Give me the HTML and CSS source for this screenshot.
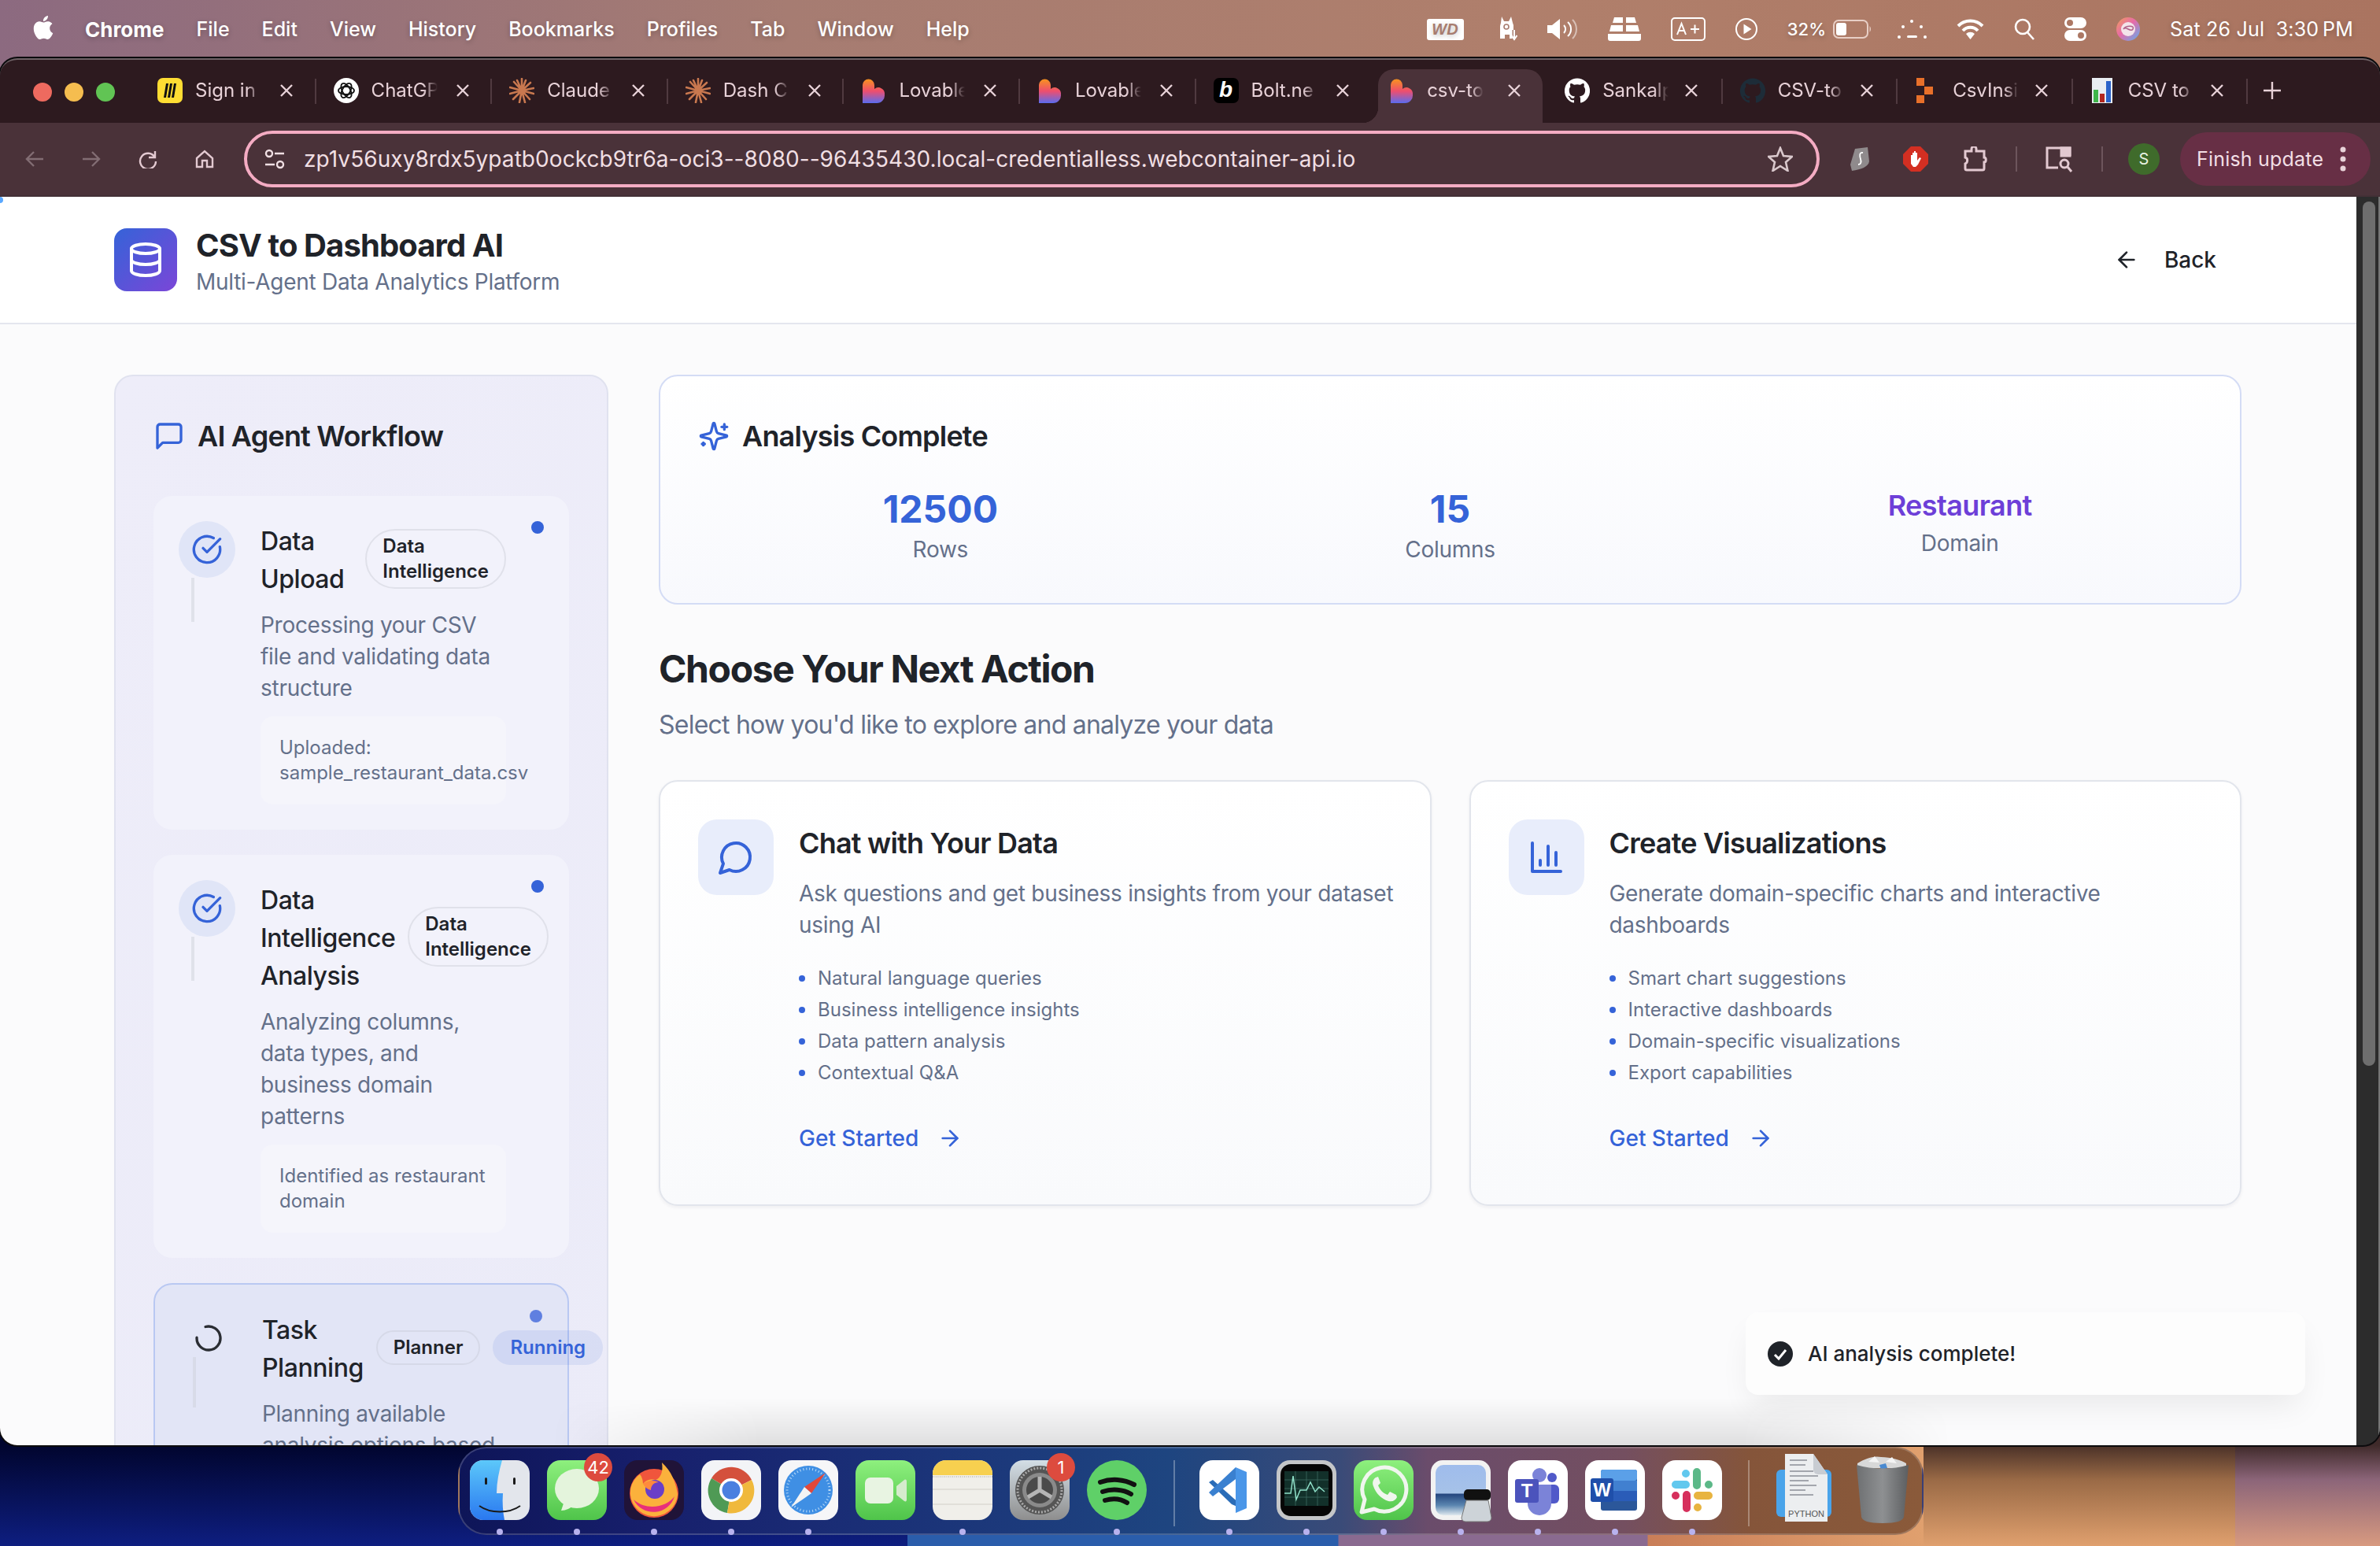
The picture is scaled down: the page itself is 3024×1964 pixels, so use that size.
FILE: index.html
```html
<!DOCTYPE html>
<html lang="en">

<head>
  <meta charset="UTF-8">
  <title>CSV to Dashboard AI</title>
  <link rel="stylesheet" href="styles.css">
</head>

<body>
  <svg class="defs" aria-hidden="true">
    <defs>
      <linearGradient id="lov" x1="0" y1="0" x2="0" y2="1">
        <stop offset="0" stop-color="#f7931e" />
        <stop offset=".5" stop-color="#ee4e6e" />
        <stop offset="1" stop-color="#5a6cf0" />
      </linearGradient>
      <symbol id="lovable" viewBox="0 0 32 32">
        <path fill="url(#lov)" d="M2 9a7.500 7.500 0 0 1 15 0v5a8 8 0 0 1 13 7 10 10 0 0 1-10 11H2z" />
      </symbol>
      <symbol id="claude" viewBox="0 0 32 32">
        <g stroke="#c9784f" stroke-width="2.600" stroke-linecap="round">
          <path d="M16 16V1M16 16l5-13M16 16l11-10M16 16l15-3M16 16l15 4M16 16l10 11M16 16l4 15M16 16l-3 15M16 16L5 27M16 16L1 20M16 16L1 12M16 16L6 5M16 16L10 3" />
        </g>
      </symbol>
      <symbol id="github" viewBox="0 0 24 24">
        <path d="M12 .3a12 12 0 0 0-3.800 23.400c.6.1.8-.3.8-.6v-2c-3.300.7-4-1.600-4-1.600-.6-1.400-1.400-1.800-1.400-1.800-1-.7.1-.7.1-.7 1.200 0 1.900 1.200 1.900 1.200 1 1.800 2.800 1.300 3.500 1 0-.8.4-1.300.7-1.600-2.700-.3-5.500-1.300-5.500-6 0-1.200.5-2.300 1.300-3.100-.2-.4-.6-1.600 0-3.200 0 0 1-.3 3.400 1.200a11.500 11.500 0 0 1 6 0c2.300-1.500 3.300-1.200 3.300-1.200.6 1.600.2 2.800 0 3.200.9.8 1.300 1.900 1.300 3.200 0 4.600-2.800 5.600-5.500 5.900.5.4.9 1 .9 2.200v3.300c0 .3.1.7.8.6A12 12 0 0 0 12 .3" />
      </symbol>
      <symbol id="close" viewBox="0 0 18 18">
        <path d="M2 2l14 14M16 2L2 16" fill="none" stroke="#e8d2d8" stroke-width="2.400" />
      </symbol>
      <symbol id="check" viewBox="0 0 24 24">
        <path d="M21.801 10A10 10 0 1 1 17 3.335" />
        <path d="m9 11 3 3L22 4" />
      </symbol>
      <symbol id="arrow" viewBox="0 0 24 24">
        <path d="M5 12h14" />
        <path d="m12 5 7 7-7 7" />
      </symbol>
    </defs>
  </svg>

  <!-- menu bar -->
  <header class="menubar">
    <svg class="apple" viewBox="0 0 24 24">
      <path fill="#fff" d="M12.152 6.896c-.948 0-2.415-1.078-3.960-1.040-2.040.027-3.910 1.183-4.961 3.014-2.117 3.675-.546 9.103 1.519 12.090 1.013 1.454 2.208 3.090 3.792 3.039 1.520-.065 2.090-.987 3.935-.987 1.831 0 2.350.987 3.960.948 1.637-.026 2.676-1.480 3.676-2.948 1.156-1.688 1.636-3.325 1.662-3.415-.039-.013-3.182-1.221-3.220-4.857-.026-3.040 2.480-4.494 2.597-4.559-1.429-2.090-3.623-2.324-4.390-2.376-2-.156-3.675 1.090-4.610 1.090zM15.530 3.830c.843-1.012 1.400-2.427 1.245-3.830-1.207.052-2.662.805-3.532 1.818-.78.896-1.454 2.338-1.273 3.714 1.338.104 2.715-.688 3.559-1.701" />
    </svg>
    <nav class="menu">
      <span class="menu-app">Chrome</span>
      <span>File</span>
      <span>Edit</span>
      <span>View</span>
      <span>History</span>
      <span>Bookmarks</span>
      <span>Profiles</span>
      <span>Tab</span>
      <span>Window</span>
      <span>Help</span>
    </nav>
    <div class="status">
      <svg class="status-wd" width="47" height="27" viewBox="0 0 47 27">
        <rect width="47" height="27" rx="3" fill="#fff" />
        <text x="23" y="20" text-anchor="middle" class="wd">WD</text>
      </svg>
      <svg width="24" height="32" viewBox="0 0 24 32" fill="#fff">
        <path d="M4 0l3 6h6l3-6 2 8 1 3v17h-5v-5H8v5H2V12l1-4z" />
        <circle cx="10" cy="13" r="3" fill="none" stroke="#a77c6f" stroke-width="1.600" />
        <path d="M20 17v11" stroke="#a77c6f" stroke-width="5" />
        <path d="M20 17v11M16.500 24l3.500 5 3.500-5" stroke="#fff" stroke-width="2" fill="none" />
      </svg>
      <svg width="39" height="28" viewBox="0 0 39 28" fill="none" stroke="#fff" stroke-width="2">
        <path d="M0 9h6l10-8v26L6 19H0z" fill="#fff" stroke="none" />
        <path d="M21 9a7 7 0 0 1 0 10M26 5a12 12 0 0 1 0 18" />
        <path d="M32 2a17 17 0 0 1 0 24" opacity=".5" />
      </svg>
      <svg width="42" height="30" viewBox="0 0 42 30" fill="#fff">
        <path d="M8 0h11v7H6zM23 0h11l2 7H23zM4 10h15v8H2zM23 10h15l2 8H23zM0 21h42v6a3 3 0 0 1-3 3H3a3 3 0 0 1-3-3z" />
      </svg>
      <svg width="44" height="30" viewBox="0 0 44 30" fill="none" stroke="#fff" stroke-width="2">
        <rect x="1" y="1" width="42" height="28" rx="4" />
        <path d="M8 22l5.500-14L19 22M10 17h7M25 15h11M30.500 9.500v11" />
      </svg>
      <svg width="28" height="28" viewBox="0 0 28 28" fill="none" stroke="#fff" stroke-width="2">
        <circle cx="14" cy="14" r="13" />
        <path d="M10.500 7.500l10 6.500-10 6.500z" fill="#fff" stroke="none" />
      </svg>
      <div class="battery">
        <span>32%</span>
        <svg width="50" height="24" viewBox="0 0 50 24" fill="none">
          <rect x="1" y="1" width="43" height="22" rx="6" stroke="#e8cfc6" stroke-width="2" />
          <rect x="4" y="4" width="13" height="16" rx="3" fill="#fff" />
          <path d="M46.500 8a6 6 0 0 1 0 8z" fill="#e8cfc6" />
        </svg>
      </div>
      <svg class="status-dots" width="37" height="26" viewBox="0 0 37 26" fill="#fff">
        <circle cx="2" cy="23" r="2" />
        <circle cx="35" cy="23" r="2" />
        <circle cx="7" cy="10" r="2" />
        <circle cx="30" cy="10" r="2" />
        <circle cx="18" cy="3" r="2" />
        <rect x="12" y="21" width="13" height="3" rx="1.500" />
      </svg>
      <svg width="35" height="27" viewBox="0 0 35 27" fill="none" stroke="#fff" stroke-width="4">
        <path d="M2 9a22 22 0 0 1 31 0M8 15a13 13 0 0 1 19 0" />
        <path d="M12 19a8 8 0 0 1 11 0l-5.500 7z" fill="#fff" stroke="none" />
      </svg>
      <svg width="26" height="28" viewBox="0 0 26 28" fill="none" stroke="#fff" stroke-width="2.600">
        <circle cx="11" cy="11" r="9" />
        <path d="M17 18l8 9" />
      </svg>
      <svg width="28" height="30" viewBox="0 0 28 30" fill="#fff">
        <path fill-rule="evenodd" d="M7 0h14a7 7 0 0 1 0 14H7A7 7 0 0 1 7 0zm0 3a4 4 0 0 0 0 8 4 4 0 0 0 0-8z" />
        <path fill-rule="evenodd" d="M7 16h14a7 7 0 0 1 0 14H7a7 7 0 0 1 0-14zm14 3a4 4 0 0 0 0 8 4 4 0 0 0 0-8z" />
      </svg>
      <svg width="30" height="30" viewBox="0 0 30 30">
        <defs>
          <linearGradient id="siri" x1="0" y1="0" x2="1" y2="1">
            <stop offset="0" stop-color="#f0a05a" />
            <stop offset=".45" stop-color="#e86aa8" />
            <stop offset="1" stop-color="#5ab0f0" />
          </linearGradient>
        </defs>
        <circle cx="15" cy="15" r="15" fill="url(#siri)" />
        <circle cx="15" cy="15" r="9" fill="#f3e4ea" />
        <path d="M9 15c3-5 9 5 12 0s-9-5-12 0" fill="none" stroke="#b0608a" stroke-width="1.500" />
      </svg>
      <span class="clock">Sat 26 Jul&nbsp;&nbsp;3:30&#8201;PM</span>
    </div>
  </header>

  <div class="window">
    <!-- tab strip -->
    <div class="tabstrip">
      <div class="lights">
        <i class="light red"></i>
        <i class="light yellow"></i>
        <i class="light green"></i>
      </div>
      <div class="tab">
        <svg class="favicon" viewBox="0 0 32 32">
          <rect width="32" height="32" rx="7" fill="#ffdd33" />
          <path d="M11 7l-3 18h3l3-18zM16 7l-3 18h3l3-18zM21 7l-3 18h3l3-18z" fill="#111" />
        </svg>
        <span class="tab-title">Sign in</span>
        <svg class="tab-close"><use href="#close" /></svg>
      </div>
      <div class="tab">
        <svg class="favicon" viewBox="0 0 32 32">
          <circle cx="16" cy="16" r="16" fill="#fff" />
          <g fill="none" stroke="#111" stroke-width="1.800">
            <ellipse cx="16" cy="16" rx="10" ry="5" />
            <ellipse cx="16" cy="16" rx="10" ry="5" transform="rotate(60 16 16)" />
            <ellipse cx="16" cy="16" rx="10" ry="5" transform="rotate(120 16 16)" />
          </g>
        </svg>
        <span class="tab-title">ChatGP</span>
        <svg class="tab-close"><use href="#close" /></svg>
      </div>
      <div class="tab">
        <svg class="favicon"><use href="#claude" /></svg>
        <span class="tab-title">Claude</span>
        <svg class="tab-close"><use href="#close" /></svg>
      </div>
      <div class="tab">
        <svg class="favicon"><use href="#claude" /></svg>
        <span class="tab-title">Dash C</span>
        <svg class="tab-close"><use href="#close" /></svg>
      </div>
      <div class="tab">
        <svg class="favicon"><use href="#lovable" /></svg>
        <span class="tab-title">Lovable</span>
        <svg class="tab-close"><use href="#close" /></svg>
      </div>
      <div class="tab">
        <svg class="favicon"><use href="#lovable" /></svg>
        <span class="tab-title">Lovable</span>
        <svg class="tab-close"><use href="#close" /></svg>
      </div>
      <div class="tab tab-before-active">
        <span class="favicon bolt">b</span>
        <span class="tab-title">Bolt.ne</span>
        <svg class="tab-close"><use href="#close" /></svg>
      </div>
      <div class="tab tab-active">
        <svg class="favicon"><use href="#lovable" /></svg>
        <span class="tab-title">csv-to-</span>
        <svg class="tab-close"><use href="#close" /></svg>
      </div>
      <div class="tab">
        <svg class="favicon github-light"><use href="#github" /></svg>
        <span class="tab-title">Sankalp</span>
        <svg class="tab-close"><use href="#close" /></svg>
      </div>
      <div class="tab">
        <svg class="favicon github-dark"><use href="#github" /></svg>
        <span class="tab-title">CSV-to</span>
        <svg class="tab-close"><use href="#close" /></svg>
      </div>
      <div class="tab">
        <svg class="favicon" viewBox="0 0 32 32" fill="#e8702a">
          <rect x="2" y="0" width="10" height="10" />
          <rect x="2" y="22" width="10" height="10" />
          <rect x="12" y="11" width="11" height="10" />
        </svg>
        <span class="tab-title">CsvInsi</span>
        <svg class="tab-close"><use href="#close" /></svg>
      </div>
      <div class="tab">
        <svg class="favicon" viewBox="0 0 32 32">
          <rect x="2" y="0" width="26" height="32" fill="#e9edf2" />
          <rect x="4" y="15" width="6" height="16" fill="#3fb54a" />
          <rect x="12" y="20" width="6" height="11" fill="#b3261e" />
          <rect x="20" y="4" width="6" height="27" fill="#2a62c9" />
        </svg>
        <span class="tab-title">CSV to</span>
        <svg class="tab-close"><use href="#close" /></svg>
      </div>
      <svg class="new-tab" viewBox="0 0 22 22">
        <path d="M11 0v22M0 11h22" stroke="#e8d2d8" stroke-width="2.400" />
      </svg>
    </div>

    <!-- toolbar -->
    <div class="toolbar">
      <div class="nav-buttons">
        <svg class="tool-icon dim" viewBox="0 0 24 24"><path d="M23 12H2M11 3l-9 9 9 9" /></svg>
        <svg class="tool-icon dim" viewBox="0 0 24 24"><path d="M1 12h21M13 3l9 9-9 9" /></svg>
        <svg class="tool-icon" viewBox="0 0 24 24"><path d="M21 2v8h-8M20.500 9.500A10 10 0 1 0 22 15" /></svg>
        <svg class="tool-icon" viewBox="0 0 24 24"><path d="M2 11 12 2l10 9v11h-7v-8H9v8H2z" /></svg>
      </div>
      <div class="omnibox">
        <svg class="tune-icon" viewBox="0 0 26 26" fill="none" stroke="#f0dfe3" stroke-width="2.400">
          <circle cx="6" cy="6" r="4" />
          <path d="M13 6h12M1 20h12" />
          <circle cx="20" cy="20" r="4" />
        </svg>
        <span class="url">zp1v56uxy8rdx5ypatb0ockcb9tr6a-oci3--8080--96435430.local-credentialless.webcontainer-api.io</span>
        <svg class="star-icon" viewBox="0 0 32 32">
          <path d="M16 2l4 10 11 1-8 7 2.500 11L16 25 6.500 31 9 20l-8-7 11-1z" fill="none" stroke="#d9c8cc" stroke-width="2.600" />
        </svg>
      </div>
      <div class="extensions">
        <svg width="24" height="30" viewBox="0 0 24 30">
          <path d="M6 2 22 0l2 18c-1 7-10 10-22 12L0 22z" fill="#8f8a8c" />
          <path d="M16 7c-5-1-4 5-3 8s1 7-3 7" fill="none" stroke="#fff" stroke-width="1.800" />
        </svg>
        <svg class="ext-wide" width="32" height="32" viewBox="0 0 32 32">
          <path d="M10 0h12l10 10v12L22 32H10L0 22V10z" fill="#d32f22" />
          <path d="M10 22V11h2v6-9h2v8-10h2v10-8h2v10l3-4 2 1-4 8-3 3h-3z" fill="#fff" />
        </svg>
        <svg class="ext-wide" width="32" height="32" viewBox="0 0 32 32">
          <path d="M4 6h8V3a3 3 0 0 1 6 0v3h10v8c3 0 3 6 0 6v8a2 2 0 0 1-2 2H6a2 2 0 0 1-2-2v-6c3-1 4-7 0-8z" fill="none" stroke="#e3c9d1" stroke-width="3" />
        </svg>
        <i class="tool-sep"></i>
        <svg width="35" height="34" viewBox="0 0 35 34" fill="none" stroke="#e3c9d1" stroke-width="3">
          <path d="M16 28H2V3h29v10" />
          <rect x="20" y="3" width="11" height="10" fill="#e3c9d1" />
          <circle cx="24" cy="23" r="5" />
          <path d="M28 27l5 6" />
        </svg>
        <i class="tool-sep"></i>
        <span class="avatar">S</span>
        <div class="update-pill">
          <span>Finish update</span>
          <svg width="8" height="32" viewBox="0 0 8 32" fill="#e8d2d8">
            <circle cx="4" cy="4" r="3.500" />
            <circle cx="4" cy="16" r="3.500" />
            <circle cx="4" cy="28" r="3.500" />
          </svg>
        </div>
      </div>
    </div>

    <!-- page -->
    <div class="viewport">
      <div class="page">
        <i class="load-dot"></i>
        <header class="app-header">
          <div class="brand">
            <div class="brand-logo">
              <svg class="icon" width="48" height="48" viewBox="0 0 24 24">
                <ellipse cx="12" cy="5" rx="9" ry="3" />
                <path d="M3 5V19A9 3 0 0 0 21 19V5" />
                <path d="M3 12A9 3 0 0 0 21 12" />
              </svg>
            </div>
            <div class="brand-text">
              <h1 class="brand-title">CSV to Dashboard AI</h1>
              <p class="brand-sub">Multi-Agent Data Analytics Platform</p>
            </div>
          </div>
          <a class="back-link" href="#">
            <svg class="icon" width="32" height="32" viewBox="0 0 24 24">
              <path d="m12 19-7-7 7-7" />
              <path d="M19 12H5" />
            </svg>
            Back
          </a>
        </header>

        <main class="layout">
          <aside class="panel">
            <h2 class="panel-title">
              <svg class="icon blue" width="40" height="40" viewBox="0 0 24 24">
                <path d="M21 15a2 2 0 0 1-2 2H7l-4 4V5a2 2 0 0 1 2-2h14a2 2 0 0 1 2 2z" />
              </svg>
              AI Agent Workflow
            </h2>

            <div class="stages">
              <article class="stage">
                <div class="stage-icon">
                  <svg class="icon blue" width="40" height="40"><use href="#check" /></svg>
                </div>
                <div class="stage-body">
                  <div class="stage-head">
                    <h3 class="stage-name">Data Upload</h3>
                    <span class="badge">Data Intelligence</span>
                  </div>
                  <p class="stage-desc">Processing your CSV file and validating data structure</p>
                  <div class="stage-note">Uploaded: sample_restaurant_data.csv</div>
                </div>
                <i class="stage-dot"></i>
              </article>

              <article class="stage">
                <div class="stage-icon">
                  <svg class="icon blue" width="40" height="40"><use href="#check" /></svg>
                </div>
                <div class="stage-body">
                  <div class="stage-head">
                    <h3 class="stage-name">Data Intelligence Analysis</h3>
                    <span class="badge">Data Intelligence</span>
                  </div>
                  <p class="stage-desc">Analyzing columns, data types, and business domain patterns</p>
                  <div class="stage-note">Identified as restaurant domain</div>
                </div>
                <i class="stage-dot"></i>
              </article>

              <article class="stage stage-running">
                <div class="stage-icon">
                  <svg class="icon spinner" width="40" height="40" viewBox="0 0 24 24">
                    <path d="M21 12a9 9 0 1 1-6.219-8.560" transform="rotate(-105 12 12)" />
                  </svg>
                </div>
                <div class="stage-body">
                  <div class="stage-head">
                    <h3 class="stage-name">Task Planning</h3>
                    <span class="badge">Planner</span>
                    <span class="badge badge-running">Running</span>
                  </div>
                  <p class="stage-desc">Planning available analysis options based on your data</p>
                </div>
                <i class="stage-dot"></i>
              </article>
            </div>
          </aside>

          <section class="results">
            <div class="summary">
              <h2 class="summary-title">
                <svg class="icon blue" width="40" height="40" viewBox="0 0 24 24">
                  <path d="M9.937 15.500A2 2 0 0 0 8.500 14.063l-6.135-1.582a.5.5 0 0 1 0-.962L8.500 9.936A2 2 0 0 0 9.937 8.500l1.582-6.135a.5.5 0 0 1 .963 0L14.063 8.500A2 2 0 0 0 15.500 9.937l6.135 1.581a.5.5 0 0 1 0 .964L15.500 14.063a2 2 0 0 0-1.437 1.437l-1.582 6.135a.5.5 0 0 1-.963 0z" />
                  <path d="M20 3v4" />
                  <path d="M22 5h-4" />
                  <path d="M4 17v2" />
                  <path d="M5 18H3" />
                </svg>
                Analysis Complete
              </h2>
              <div class="stats">
                <div class="stat">
                  <div class="stat-value">12500</div>
                  <div class="stat-label">Rows</div>
                </div>
                <div class="stat">
                  <div class="stat-value">15</div>
                  <div class="stat-label">Columns</div>
                </div>
                <div class="stat">
                  <div class="stat-word">Restaurant</div>
                  <div class="stat-label">Domain</div>
                </div>
              </div>
            </div>

            <h2 class="next-title">Choose Your Next Action</h2>
            <p class="next-sub">Select how you'd like to explore and analyze your data</p>

            <div class="actions">
              <article class="action">
                <div class="action-icon">
                  <svg class="icon blue" width="48" height="48" viewBox="0 0 24 24">
                    <path d="M7.900 20A9 9 0 1 0 4 16.100L2 22Z" />
                  </svg>
                </div>
                <div class="action-body">
                  <h3 class="action-title">Chat with Your Data</h3>
                  <p class="action-desc">Ask questions and get business insights from your dataset using AI</p>
                  <ul class="action-list">
                    <li>Natural language queries</li>
                    <li>Business intelligence insights</li>
                    <li>Data pattern analysis</li>
                    <li>Contextual Q&amp;A</li>
                  </ul>
                  <a class="action-link" href="#">Get Started
                    <svg class="icon" width="32" height="32"><use href="#arrow" /></svg>
                  </a>
                </div>
              </article>

              <article class="action">
                <div class="action-icon">
                  <svg class="icon blue" width="48" height="48" viewBox="0 0 24 24">
                    <path d="M3 3v18h18" />
                    <path d="M18 17V9" />
                    <path d="M13 17V5" />
                    <path d="M8 17v-3" />
                  </svg>
                </div>
                <div class="action-body">
                  <h3 class="action-title">Create Visualizations</h3>
                  <p class="action-desc">Generate domain-specific charts and interactive dashboards</p>
                  <ul class="action-list">
                    <li>Smart chart suggestions</li>
                    <li>Interactive dashboards</li>
                    <li>Domain-specific visualizations</li>
                    <li>Export capabilities</li>
                  </ul>
                  <a class="action-link" href="#">Get Started
                    <svg class="icon" width="32" height="32"><use href="#arrow" /></svg>
                  </a>
                </div>
              </article>
            </div>
          </section>
        </main>

        <i class="dock-shade"></i>

        <div class="toast">
          <svg width="32" height="32" viewBox="0 0 32 32">
            <circle cx="16" cy="16" r="16" fill="#1f2329" />
            <path d="M9 17l5 5 9-11" fill="none" stroke="#fff" stroke-width="3" />
          </svg>
          AI analysis complete!
        </div>
      </div>
      <div class="scrollbar"><i class="scroll-thumb"></i></div>
    </div>
  </div>

  <!-- dock -->
  <footer class="dock">
    <div class="dock-item">
      <svg class="dock-icon" viewBox="0 0 76 76">
        <defs>
          <linearGradient id="finder" x1="0" y1="0" x2="0" y2="1">
            <stop offset="0" stop-color="#5cc8fa" />
            <stop offset="1" stop-color="#2a78f0" />
          </linearGradient>
        </defs>
        <rect width="76" height="76" rx="17" fill="#e3e6ec" />
        <path d="M17 0h24c-4 14-7 28-7 42h8c-1 12 0 24 2 34H17A17 17 0 0 1 0 59V17A17 17 0 0 1 17 0z" fill="url(#finder)" />
        <path d="M12 58c14 10 38 10 52 0" fill="none" stroke="#1a1a1a" stroke-width="2" />
        <rect x="19" y="22" width="3" height="9" rx="1.500" fill="#1a1a1a" />
        <rect x="55" y="22" width="3" height="9" rx="1.500" fill="#1a1a1a" />
      </svg>
      <i class="dock-dot"></i>
    </div>
    <div class="dock-item">
      <svg class="dock-icon" viewBox="0 0 76 76">
        <defs>
          <linearGradient id="msg" x1="0" y1="0" x2="0" y2="1">
            <stop offset="0" stop-color="#8ef07e" />
            <stop offset="1" stop-color="#4fc44a" />
          </linearGradient>
        </defs>
        <rect width="76" height="76" rx="17" fill="url(#msg)" />
        <ellipse cx="38" cy="36" rx="28" ry="25" fill="#e4f4dc" />
        <path d="M22 52l-4 12c6 0 12-3 16-7z" fill="#e4f4dc" />
      </svg>
      <span class="dock-badge">42</span>
      <i class="dock-dot"></i>
    </div>
    <div class="dock-item">
      <svg class="dock-icon" viewBox="0 0 76 76">
        <rect width="76" height="76" rx="17" fill="#201338" />
        <circle cx="38" cy="42" r="31" fill="#f0553c" />
        <path d="M8 38a30 30 0 0 0 60 6C66 28 60 14 48 3c2 12-2 20-8 22-6-2-12 0-16 5 0-5-2-10-4-12C14 22 9 30 8 38z" fill="#fbb13c" />
        <path d="M12 50a28 28 0 0 0 52-4c-8 12-34 20-52 4z" fill="#e8307a" />
        <circle cx="39" cy="37" r="12" fill="#6a3fc8" />
        <path d="M24 30c6-5 14-5 20-2-6 0-10 4-10 10-4-1-8-4-10-8z" fill="#ff8a3c" />
      </svg>
      <i class="dock-dot"></i>
    </div>
    <div class="dock-item">
      <svg class="dock-icon" viewBox="0 0 76 76">
        <rect width="76" height="76" rx="17" fill="#f3f4f7" />
        <path d="M38 38 13 23A29 29 0 0 1 64 25z" fill="#d4503c" />
        <path d="M38 38 13 23a29 29 0 0 0 20 44z" fill="#4f9a55" />
        <path d="M38 38l26-13a29 29 0 0 1-31 42z" fill="#f0b93c" />
        <circle cx="38" cy="38" r="15" fill="#fff" />
        <circle cx="38" cy="38" r="11.500" fill="#4a7fe0" />
      </svg>
      <i class="dock-dot"></i>
    </div>
    <div class="dock-item">
      <svg class="dock-icon" viewBox="0 0 76 76">
        <rect width="76" height="76" rx="17" fill="#f6f6f8" />
        <circle cx="38" cy="38" r="31" fill="#3f8fe4" />
        <circle cx="38" cy="38" r="27" fill="none" stroke="#bcdcf8" stroke-width="3" stroke-dasharray="1 3" />
        <path d="M60 16 33 34l9 8z" fill="#e2483a" />
        <path d="M16 60l17-26 9 8z" fill="#f4f4f4" />
      </svg>
      <i class="dock-dot"></i>
    </div>
    <div class="dock-item">
      <svg class="dock-icon" viewBox="0 0 76 76">
        <defs>
          <linearGradient id="facetime" x1="0" y1="0" x2="0" y2="1">
            <stop offset="0" stop-color="#8ef07e" />
            <stop offset="1" stop-color="#4fc44a" />
          </linearGradient>
        </defs>
        <rect width="76" height="76" rx="17" fill="url(#facetime)" />
        <rect x="12" y="22" width="36" height="33" rx="7" fill="#e8f4e2" />
        <path d="M52 33l10-8c2-1 3 0 3 2v23c0 2-1 3-3 2l-10-8z" fill="#d5ebcd" />
      </svg>
      <i class="dock-gap"></i>
    </div>
    <div class="dock-item">
      <svg class="dock-icon" viewBox="0 0 76 76">
        <rect width="76" height="76" rx="17" fill="#f0efea" />
        <path d="M17 0h42a17 17 0 0 1 17 17v2H0v-2A17 17 0 0 1 17 0z" fill="#f7d04f" />
        <path d="M0 21h76" stroke="#c9c7c0" stroke-width="2" stroke-dasharray="1 1.500" />
        <path d="M0 37h76M0 56h76" stroke="#dcdad4" stroke-width="1.600" />
      </svg>
      <i class="dock-dot"></i>
    </div>
    <div class="dock-item">
      <svg class="dock-icon" viewBox="0 0 76 76">
        <defs>
          <linearGradient id="gear" x1="0" y1="0" x2="0" y2="1">
            <stop offset="0" stop-color="#d3dee6" />
            <stop offset="1" stop-color="#8e8e8e" />
          </linearGradient>
        </defs>
        <rect width="76" height="76" rx="17" fill="url(#gear)" />
        <circle cx="38" cy="38" r="31" fill="#555" />
        <circle cx="38" cy="38" r="28" fill="none" stroke="#aaa" stroke-width="3" stroke-dasharray="2 2" />
        <circle cx="38" cy="38" r="22" fill="#8a8a8a" />
        <circle cx="38" cy="38" r="17" fill="#4a4a4a" />
        <path d="M38 38V21M38 38l15 9M38 38l-15 9" stroke="#b5b5b5" stroke-width="5" />
      </svg>
      <span class="dock-badge">1</span>
      <i class="dock-gap"></i>
    </div>
    <div class="dock-item">
      <svg class="dock-icon spotify" viewBox="0 0 76 76">
        <circle cx="38" cy="38" r="38" fill="#5fd068" />
        <path d="M17 28c14-5 30-4 43 3M20 40c12-4 26-3 36 3M23 51c10-3 20-2 28 3" fill="none" stroke="#111" stroke-width="6" stroke-linecap="round" />
      </svg>
      <i class="dock-dot"></i>
    </div>

    <i class="dock-sep dock-sep-a"></i>

    <div class="dock-item">
      <svg class="dock-icon" viewBox="0 0 76 76">
        <rect width="76" height="76" rx="17" fill="#fff" />
        <path d="M12 28l5-3 35 31-4 3L41 56z" fill="#2a6cb8" />
        <path d="M46 9 60 15v46l-14 6z" fill="#4a96e8" />
        <path d="M46 9 12 41l5 5L46 24z" fill="#3a80d0" />
      </svg>
      <i class="dock-dot"></i>
    </div>
    <div class="dock-item">
      <svg class="dock-icon" viewBox="0 0 76 76">
        <rect width="76" height="76" rx="17" fill="#c4c6c8" />
        <rect x="5" y="5" width="66" height="66" rx="13" fill="#060606" />
        <rect x="10" y="14" width="56" height="44" fill="#12302a" />
        <path d="M10 25h56M10 36h56M10 47h56M24 14v44M38 14v44M52 14v44" stroke="#3e6a60" stroke-width=".8" />
        <path d="M10 42h8l3-22 4 30 5-12h8l5-10 6 12 5-6 7 6" fill="none" stroke="#8fe0c8" stroke-width="1.500" />
      </svg>
      <i class="dock-dot"></i>
    </div>
    <div class="dock-item">
      <svg class="dock-icon" viewBox="0 0 76 76">
        <defs>
          <linearGradient id="wa" x1="0" y1="0" x2="0" y2="1">
            <stop offset="0" stop-color="#8ef07e" />
            <stop offset="1" stop-color="#4fc44a" />
          </linearGradient>
        </defs>
        <rect width="76" height="76" rx="17" fill="url(#wa)" />
        <path d="M10 66l4-16A28 28 0 1 1 26 62z" fill="none" stroke="#f0f6ee" stroke-width="5" stroke-linejoin="round" />
        <path d="M28 22c-3 2-5 6-3 11 3 9 10 16 19 19 6 1 9-1 11-5l-1-3-8-4-3 4c-6-2-10-7-12-12l3-3-3-8z" fill="#f0f6ee" />
      </svg>
      <i class="dock-dot"></i>
    </div>
    <div class="dock-item">
      <svg class="dock-icon overflow" viewBox="0 0 76 76">
        <defs>
          <linearGradient id="sea" x1="0" y1="0" x2="0" y2="1">
            <stop offset="0" stop-color="#9fbcec" />
            <stop offset=".56" stop-color="#a6c2e8" />
            <stop offset=".58" stop-color="#24467e" />
            <stop offset=".8" stop-color="#5a85b0" />
            <stop offset="1" stop-color="#dfe8ee" />
          </linearGradient>
        </defs>
        <rect width="76" height="76" rx="15" fill="#f2f2f2" />
        <rect x="6" y="6" width="64" height="64" rx="10" fill="url(#sea)" />
        <rect x="42" y="37" width="34" height="14" rx="5" fill="#111" />
        <path d="M45 51h28l4 22a5 5 0 0 1-5 5H44a5 5 0 0 1-5-5z" fill="#cdd3d8" stroke="#777" />
      </svg>
      <i class="dock-dot"></i>
    </div>
    <div class="dock-item">
      <svg class="dock-icon" viewBox="0 0 76 76">
        <rect width="76" height="76" rx="17" fill="#fff" />
        <circle cx="40" cy="19" r="9" fill="#7b83d8" />
        <circle cx="56" cy="22" r="6" fill="#5059c9" />
        <rect x="48" y="31" width="17" height="24" rx="6" fill="#5059c9" />
        <path d="M25 31h30v24a15 15 0 0 1-30 0z" fill="#7b83d8" />
        <rect x="9" y="24" width="30" height="30" rx="3" fill="#4b53bc" />
        <text x="24" y="47" text-anchor="middle" class="dock-letter">T</text>
      </svg>
      <i class="dock-dot"></i>
    </div>
    <div class="dock-item">
      <svg class="dock-icon" viewBox="0 0 76 76">
        <rect width="76" height="76" rx="17" fill="#fff" />
        <rect x="20" y="12" width="46" height="52" rx="3" fill="#2b579a" />
        <rect x="20" y="12" width="46" height="14" rx="3" fill="#5ba0e8" />
        <rect x="20" y="26" width="46" height="13" fill="#4180d0" />
        <rect x="20" y="39" width="46" height="13" fill="#2a5cb8" />
        <rect x="7" y="23" width="29" height="30" rx="3" fill="#1f4faa" />
        <text x="21.500" y="46" text-anchor="middle" class="dock-letter">W</text>
      </svg>
      <i class="dock-dot"></i>
    </div>
    <div class="dock-item">
      <svg class="dock-icon" viewBox="0 0 76 76">
        <rect width="76" height="76" rx="17" fill="#fff" />
        <g stroke-width="10" stroke-linecap="round" fill="none">
          <path d="M30 17v0M17 31h13" stroke="#62c8ee" />
          <path d="M44 15v17M59 31v0" stroke="#5cb888" />
          <path d="M45 45h14M45 60v0" stroke="#e8b440" />
          <path d="M17 45v0M31 44v17" stroke="#d6305c" />
        </g>
      </svg>
      <i class="dock-dot"></i>
    </div>

    <i class="dock-sep dock-sep-b"></i>

    <div class="dock-item">
      <svg class="dock-icon overflow" viewBox="0 0 76 76">
        <rect x="1" y="12" width="70" height="60" rx="6" fill="#4aa4ea" />
        <path d="M12 -8h36l18 26v60H12z" fill="#eceef0" />
        <path d="M48 -8v20a6 6 0 0 0 6 6h12z" fill="#c8ccd2" />
        <path d="M18 0h22M18 6h20M18 14h30M18 20h36M18 26h24M18 32h34M18 38h20M18 44h30" stroke="#8a8f96" stroke-width="1.400" />
        <text x="39" y="72" text-anchor="middle" class="doc-label">PYTHON</text>
      </svg>
    </div>
    <div class="dock-item">
      <svg class="dock-icon overflow" viewBox="0 0 76 76">
        <defs>
          <linearGradient id="trash" x1="0" y1="0" x2="1" y2="0">
            <stop offset="0" stop-color="#6e7072" />
            <stop offset=".5" stop-color="#8e9092" />
            <stop offset="1" stop-color="#5c5e60" />
          </linearGradient>
        </defs>
        <path d="M6 4c10-6 20-10 30-8 12 0 26 4 32 8v6H6z" fill="#d8d8d8" />
        <path d="M20 2l8-7 6 8zM42 2l8-6 6 8z" fill="#f4f4f4" />
        <path d="M34 6l8-2 2 6-8 2z" fill="#4a8ad0" />
        <path d="M5 6c20 6 46 6 66 0l-6 66c-1 5-9 8-27 8s-26-3-27-8z" fill="url(#trash)" />
      </svg>
    </div>
  </footer>
</body>

</html>
```

FILE: styles.css
```css
* {
  box-sizing: border-box;
}

html,
body {
  margin: 0;
  padding: 0;
  width: 3024px;
  height: 1964px;
  overflow: hidden;
}

body {
  position: relative;
  font-family: Inter, "Noto Sans", sans-serif;
  color: #1f2329;
  background:
    linear-gradient(90deg, #8c6a80, #a67c72 1000px, #b07f6b 2000px, #aa7460) 0 0 / 100% 110px no-repeat,
    linear-gradient(180deg, #4a3128 1836px, #9a6a46 1880px, #e0a06e 1964px) 2444px 0 / 396px 100% no-repeat,
    linear-gradient(180deg, #3f2a2a 1836px, #8c6579 1880px, #d89a80 1964px) 2840px 0 / 184px 100% no-repeat,
    linear-gradient(180deg, #01052e 1836px, #0e1e80 1964px) 0 0 / 1153px 100% no-repeat,
    linear-gradient(90deg, #2a5dab 1700px, #8a6a90 1701px, #8a6a90 2093px, #c97e58 2094px, #e0a06e 2444px);
}

h1,
h2,
h3,
p,
ul {
  margin: 0;
  padding: 0;
}

a {
  color: inherit;
  text-decoration: none;
}

.defs {
  position: absolute;
  width: 0;
  height: 0;
}

.icon {
  flex: none;
  fill: none;
  stroke: currentColor;
  stroke-width: 2;
  stroke-linecap: round;
  stroke-linejoin: round;
}

.blue {
  color: #3563d8;
}

/* menu bar */

.menubar {
  display: flex;
  align-items: center;
  height: 74px;
  padding: 0 34px 0 40px;
  color: #fff;
  font-size: 25px;
  text-shadow: 0 2px 6px rgba(0, 0, 0, .25);
}

.apple {
  flex: none;
  width: 30px;
  height: 32px;
  margin-top: -4px;
  margin-right: 38px;
}

.menu {
  display: flex;
  gap: 41px;
  font-weight: 500;
}

.menu-app {
  font-size: 26px;
  font-weight: 700;
}

.status {
  display: flex;
  align-items: center;
  gap: 38px;
  margin-left: auto;
}

.status-wd {
  margin-right: 6px;
}

.status-dots {
  margin-left: -6px;
}

.wd {
  font-family: "Liberation Sans", sans-serif;
  font-size: 20px;
  font-weight: 700;
  font-style: italic;
  fill: #a77c6f;
}

.battery {
  display: flex;
  align-items: center;
  gap: 9px;
  font-size: 22px;
  font-weight: 500;
}

.clock {
  letter-spacing: .2px;
}

/* window */

.window {
  display: flex;
  flex-direction: column;
  height: 1762px;
  border-radius: 22px;
  overflow: hidden;
  background: #2d1a1f;
  border-top: 2px solid #6e6266;
  box-shadow: 0 0 0 2px #0b0b0d;
}

.tabstrip {
  position: relative;
  display: flex;
  align-items: center;
  height: 80px;
  padding-top: 12px;
  color: #e8d2d8;
}

.lights {
  display: flex;
  flex: none;
  gap: 16px;
  width: 178px;
  padding-left: 42px;
  margin-top: -10px;
}

.light {
  width: 24px;
  height: 24px;
  border-radius: 50%;
}

.red {
  background: #ee6a5f;
}

.yellow {
  background: #f5bd4f;
}

.green {
  background: #61c454;
}

.tab {
  position: relative;
  display: flex;
  align-items: center;
  flex: none;
  width: 223.6px;
  height: 68px;
  padding-left: 22px;
  gap: 16px;
  font-size: 24px;
  line-height: 32px;
  color: #e8d2d8;
}

.tab:after {
  content: "";
  position: absolute;
  right: 0;
  top: 12px;
  width: 2px;
  height: 32px;
  background: #503a40;
}

.tab > * {
  margin-top: -14px;
}

.tab-before-active:after,
.tab-active:after {
  display: none;
}

.tab-active {
  width: 209px;
  margin-left: 8px;
  margin-right: 6px;
  padding-left: 14px;
  border-radius: 20px 20px 0 0;
  background: #4a3239;
}

.tab-active:before {
  content: "";
  position: absolute;
  left: -20px;
  bottom: 0;
  width: 20px;
  height: 20px;
  margin: 0;
  background: radial-gradient(circle at 0 0, transparent 20px, #4a3239 20.5px);
}

.tab-active .tab-title {
  width: 72px;
}

.tab-active .tab-close {
  margin-left: 14px;
}

.tab-active ~ .tab {
  width: 222.5px;
}

.tab-active ~ .tab .tab-close {
  margin-left: 4px;
}

.favicon {
  flex: none;
  width: 32px;
  height: 32px;
}

.bolt {
  border-radius: 7px;
  background: #000;
  color: #fff;
  font-family: "Liberation Sans", sans-serif;
  font-size: 28px;
  font-weight: 700;
  font-style: italic;
  line-height: 30px;
  text-align: center;
}

.github-light {
  fill: #fff;
}

.github-dark {
  fill: #1d2c38;
}

.tab-title {
  flex: none;
  width: 84px;
  overflow: hidden;
  white-space: nowrap;
  -webkit-mask-image: linear-gradient(90deg, #000 78%, transparent);
  mask-image: linear-gradient(90deg, #000 78%, transparent);
}

.tab-close {
  flex: none;
  width: 18px;
  height: 18px;
  margin-left: 7px;
}

.new-tab {
  flex: none;
  width: 22px;
  height: 22px;
  margin-left: 20px;
  margin-top: -14px;
}

.toolbar {
  display: flex;
  align-items: center;
  height: 94px;
  padding-left: 32px;
  background: #4a3239;
  border-bottom: 2px solid #433036;
}

.nav-buttons {
  display: flex;
  flex: none;
  gap: 48px;
  width: 278px;
}

.tool-icon {
  width: 24px;
  height: 24px;
  fill: none;
  stroke: #e3c9d1;
  stroke-width: 2.4;
}

.tool-icon.dim {
  stroke: #826d73;
}

.omnibox {
  display: flex;
  align-items: center;
  flex: none;
  width: 2002px;
  height: 72px;
  padding: 0 30px 0 22px;
  border: 4px solid #f4acc3;
  border-radius: 36px;
}

.tune-icon {
  flex: none;
  width: 26px;
  height: 26px;
}

.url {
  margin-left: 24px;
  font-size: 28px;
  letter-spacing: .06px;
  color: #f0dfe3;
  white-space: nowrap;
}

.star-icon {
  flex: none;
  width: 32px;
  height: 32px;
  margin-left: auto;
}

.extensions {
  display: flex;
  align-items: center;
  flex: none;
  gap: 36px;
  margin-left: 39px;
}

.ext-wide {
  margin-left: 7px;
}

.tool-sep {
  width: 2px;
  height: 32px;
  background: #6d555c;
}

.avatar {
  width: 40px;
  height: 40px;
  margin-left: -4px;
  border-radius: 50%;
  background: #3f6b2b;
  color: #e8f2e2;
  font-size: 20px;
  line-height: 40px;
  text-align: center;
}

.update-pill {
  display: flex;
  align-items: center;
  gap: 21px;
  width: 242px;
  height: 68px;
  margin-left: -10px;
  padding-left: 21px;
  border-radius: 34px;
  background: #672f45;
  color: #f2dfe5;
  font-size: 25px;
  letter-spacing: .2px;
}

/* page */

.viewport {
  display: flex;
  height: 1586px;
  overflow: hidden;
}

.page {
  position: relative;
  flex: 1;
  min-width: 0;
  overflow: hidden;
  background: #fbfbfc;
}

.load-dot {
  position: absolute;
  left: -4px;
  top: 0;
  width: 8px;
  height: 8px;
  border-radius: 50%;
  background: #5aa8ff;
}

.scrollbar {
  flex: none;
  width: 30px;
  padding: 6px 4px 0 8px;
  background: #2c2c2c;
  border-right: 2px solid #777;
}

.scroll-thumb {
  display: block;
  width: 16px;
  height: 1098px;
  border-radius: 8px;
  background: #6e6e6e;
}

.app-header {
  display: flex;
  align-items: center;
  justify-content: space-between;
  height: 162px;
  padding: 0 146px 0 145px;
  background: #fff;
  border-bottom: 2px solid #e4e6ee;
}

.brand {
  display: flex;
  align-items: center;
  gap: 24px;
}

.brand-logo {
  display: flex;
  align-items: center;
  justify-content: center;
  width: 80px;
  height: 80px;
  border-radius: 16px;
  background: linear-gradient(135deg, #3563d8, #7b46d8);
  color: #fff;
}

.brand-text {
  padding-top: 5px;
}

.brand-title {
  font-size: 40px;
  font-weight: 700;
  line-height: 48px;
  letter-spacing: -.9px;
}

.brand-sub {
  margin-top: 2px;
  font-size: 28px;
  line-height: 40px;
  letter-spacing: -.28px;
  color: #64708a;
}

.back-link {
  display: flex;
  align-items: center;
  gap: 32px;
  padding-right: 32px;
  font-size: 28px;
  font-weight: 500;
}

.layout {
  display: grid;
  grid-template-columns: 628px 1fr;
  gap: 64px;
  align-items: start;
  padding: 64px 146px 0 145px;
}

/* workflow panel */

.panel {
  padding: 48px;
  border: 2px solid #e0e2ef;
  border-radius: 24px;
  background: linear-gradient(135deg, #eeedf9, #ebebf8);
}

.panel-title {
  display: flex;
  align-items: center;
  gap: 16px;
  font-size: 36px;
  font-weight: 600;
  line-height: 56px;
  letter-spacing: -.8px;
}

.stages {
  display: flex;
  flex-direction: column;
  gap: 32px;
  margin-top: 48px;
}

.stage {
  position: relative;
  display: flex;
  gap: 32px;
  padding: 32px;
  border-radius: 24px;
  background: #f2f2fb;
}

.stage-running {
  border: 2px solid #b9c8f2;
  background: #e2e5f6;
}

.stage-icon {
  position: relative;
  display: flex;
  align-items: center;
  justify-content: center;
  flex: none;
  width: 72px;
  height: 72px;
  border-radius: 50%;
  background: #e0e5f7;
}

.stage-running .stage-icon {
  background: none;
}

.stage-icon:after {
  content: "";
  position: absolute;
  left: 16px;
  top: 72px;
  width: 4px;
  height: 56px;
  background: #e0e2ea;
}

.stage-running .stage-icon:after {
  top: 60px;
  height: 64px;
  background: #d8dbe8;
}

.spinner {
  color: #2a2d33;
}

.stage-body {
  flex: 1;
  min-width: 0;
}

.stage-head {
  display: flex;
  align-items: center;
  gap: 16px;
}

.stage-name {
  padding-top: 2px;
  margin-bottom: -2px;
  font-size: 32px;
  font-weight: 500;
  line-height: 48px;
  letter-spacing: -.45px;
}

.badge {
  padding: 4px 20px;
  border: 2px solid #e0e1ea;
  border-radius: 40px;
  font-size: 24px;
  font-weight: 600;
  line-height: 32px;
}

.stage-running .badge {
  border-color: #d6d9e8;
}

.stage-running .badge-running {
  border-color: transparent;
  background: rgba(53, 99, 216, .1);
  color: #3563d8;
}

.stage-desc {
  margin-top: 16px;
  font-size: 28px;
  line-height: 40px;
  letter-spacing: -.28px;
  color: #64708a;
}

.stage-note {
  margin-top: 16px;
  padding: 24px;
  border-radius: 16px;
  background: #f5f5fb;
  font-size: 24px;
  line-height: 32px;
  color: #64708a;
}

.stage-dot {
  flex: none;
  width: 16px;
  height: 16px;
  border-radius: 50%;
  background: #3563d8;
}

.stage-running .stage-dot {
  background: #5f7fe0;
}

/* results */

.summary {
  padding: 48px;
  border: 2px solid #d4dcf5;
  border-radius: 24px;
  background: linear-gradient(180deg, #fff, #f8f9fd);
}

.summary-title {
  display: flex;
  align-items: center;
  gap: 16px;
  font-size: 36px;
  font-weight: 600;
  line-height: 56px;
  letter-spacing: -.8px;
}

.stats {
  display: grid;
  grid-template-columns: repeat(3, 1fr);
  gap: 32px;
  margin-top: 32px;
  text-align: center;
}

.stat-value {
  padding-top: 2px;
  font-size: 48px;
  font-weight: 700;
  line-height: 62px;
  color: #3563d8;
}

.stat-word {
  font-size: 36px;
  font-weight: 600;
  line-height: 56px;
  letter-spacing: -.6px;
  color: #6d3fd8;
}

.stat-label {
  font-size: 28px;
  line-height: 40px;
  letter-spacing: -.28px;
  color: #64708a;
}

.next-title {
  margin-top: 50px;
  font-size: 48px;
  font-weight: 700;
  line-height: 64px;
  letter-spacing: -1.4px;
}

.next-sub {
  margin-top: 15px;
  font-size: 32px;
  line-height: 48px;
  letter-spacing: -.77px;
  color: #64708a;
}

.actions {
  display: grid;
  grid-template-columns: 1fr 1fr;
  gap: 48px;
  margin-top: 46px;
}

.action {
  display: flex;
  gap: 32px;
  padding: 48px 36px 64px 48px;
  border: 2px solid #e2e5ec;
  border-radius: 24px;
  background: linear-gradient(180deg, #fff, #f9fafc);
  box-shadow: 0 2px 4px rgba(30, 40, 70, .06);
}

.action-icon {
  display: flex;
  align-items: center;
  justify-content: center;
  flex: none;
  width: 96px;
  height: 96px;
  border-radius: 24px;
  background: #e8edfb;
}

.action-body {
  flex: 1;
  min-width: 0;
}

.action-title {
  margin-top: 2px;
  font-size: 36px;
  font-weight: 600;
  line-height: 56px;
  letter-spacing: -.8px;
}

.action-desc {
  margin-top: 16px;
  font-size: 28px;
  line-height: 40px;
  letter-spacing: -.3px;
  color: #64708a;
}

.action-list {
  display: flex;
  flex-direction: column;
  gap: 8px;
  margin-top: 32px;
  list-style: none;
  font-size: 24px;
  line-height: 32px;
  color: #64708a;
}

.action-list li {
  display: flex;
  align-items: center;
  gap: 16px;
}

.action-list li:before {
  content: "";
  width: 8px;
  height: 8px;
  border-radius: 50%;
  background: #3563d8;
}

.action-link {
  display: flex;
  align-items: center;
  gap: 24px;
  margin-top: 47px;
  font-size: 28px;
  font-weight: 500;
  line-height: 40px;
  color: #3563d8;
}

/* toast and dock */

.dock-shade {
  position: absolute;
  left: 700px;
  bottom: 0;
  width: 1780px;
  height: 60px;
  background: linear-gradient(180deg, transparent, rgba(0, 0, 0, .11));
  -webkit-mask-image: linear-gradient(90deg, transparent, #000 15%, #000 85%, transparent);
  mask-image: linear-gradient(90deg, transparent, #000 15%, #000 85%, transparent);
}

.toast {
  position: absolute;
  left: 2218px;
  top: 1417px;
  display: flex;
  align-items: center;
  gap: 19px;
  width: 711px;
  height: 105px;
  padding-left: 28px;
  border-radius: 16px;
  background: #fdfdfd;
  box-shadow: 0 20px 40px -8px rgba(0, 0, 0, .08);
  font-size: 26px;
  font-weight: 500;
}

.dock {
  position: absolute;
  left: 582px;
  top: 1838px;
  display: flex;
  gap: 22px;
  width: 1862px;
  height: 112px;
  padding: 15px 0 0 13px;
  border: 2px solid rgba(255, 255, 255, .18);
  border-radius: 36px;
  background: linear-gradient(90deg, #0e1558, #171f6c 240px, #1a2e76 500px, #1e4580 900px, #3a4b78 1120px, #6a4c6b 1230px, #744f60 1480px, #85553a 1640px, #8a5a3a);
}

.dock-item {
  position: relative;
  flex: none;
  width: 76px;
}

.dock-icon {
  display: block;
  width: 76px;
  height: 76px;
}

.overflow {
  overflow: visible;
}

.dock-dot,
.dock-gap {
  display: block;
  width: 8px;
  height: 8px;
  margin: 11px auto 0;
  border-radius: 50%;
}

.dock-dot {
  background: #b8b2ee;
}

.dock-badge {
  position: absolute;
  right: -7px;
  top: -9px;
  width: 36px;
  height: 36px;
  border-radius: 50%;
  background: #dd4b3e;
  color: #fff;
  font-size: 22px;
  line-height: 36px;
  text-align: center;
}

.dock-letter {
  font-family: "Liberation Sans", sans-serif;
  font-size: 24px;
  font-weight: 700;
  fill: #fff;
}

.doc-label {
  font-family: "Liberation Sans", sans-serif;
  font-size: 11px;
  fill: #555;
}

.dock-sep {
  flex: none;
  width: 2px;
  height: 84px;
  background: rgba(255, 255, 255, .3);
}

.dock-sep-a {
  margin: 0 9px 0 12px;
}

.dock-sep-b {
  margin: 0 11px 0 11px;
}
```
